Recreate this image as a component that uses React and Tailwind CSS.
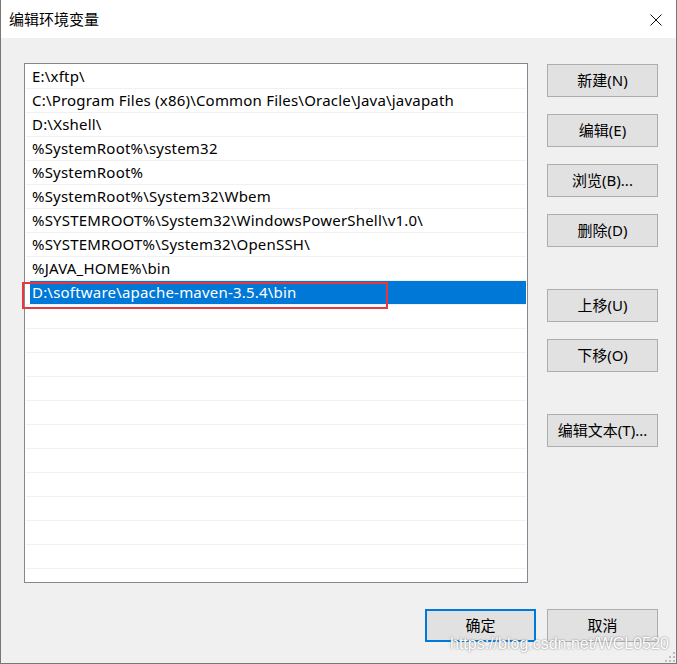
const paths = [
  'E:\\xftp\\',
  'C:\\Program Files (x86)\\Common Files\\Oracle\\Java\\javapath',
  'D:\\Xshell\\',
  '%SystemRoot%\\system32',
  '%SystemRoot%',
  '%SystemRoot%\\System32\\Wbem',
  '%SYSTEMROOT%\\System32\\WindowsPowerShell\\v1.0\\',
  '%SYSTEMROOT%\\System32\\OpenSSH\\',
  '%JAVA_HOME%\\bin',
  'D:\\software\\apache-maven-3.5.4\\bin',
]

const SELECTED = 9
const rows = [...paths, ...Array(12).fill('')]

function Button({ children, primary, className = '' }) {
  return (
    <button
      className={`flex h-[33px] w-[111px] items-center justify-center bg-[#e1e1e1] text-[15px] leading-none text-black ${
        primary ? 'border-2 border-[#0078d7]' : 'border border-[#adadad]'
      } ${className}`}
    >
      {children}
    </button>
  )
}

export default function App() {
  return (
    <div
      className="relative flex h-[664px] w-[677px] flex-col overflow-hidden border-x border-b border-[#777777] bg-[#f0f0f0]"
      style={{ fontFamily: '"Noto Sans", "Noto Sans CJK SC", sans-serif' }}
    >
      {/* title bar */}
      <div className="flex h-[38px] shrink-0 items-center justify-between bg-white pl-[8px] pr-[14px]">
        <span className="text-[15px] text-black">编辑环境变量</span>
        <svg width="12" height="12" viewBox="0 0 12 12" className="mt-[1px]">
          <path d="M0.5 0.5 L11.5 11.5 M11.5 0.5 L0.5 11.5" stroke="#111" strokeWidth="1" fill="none" />
        </svg>
      </div>

      <div className="flex flex-1 flex-col pl-[23px] pr-[18px]">
        <div className="mt-[25px] flex items-start gap-[19px]">
          {/* path list */}
          <div className="h-[520px] w-[504px] overflow-hidden border border-[#828790] bg-white pt-px">
            {rows.map((p, i) => (
              <div
                key={i}
                className="mx-px flex h-[24px] whitespace-nowrap border-b border-[#f0f0f0] text-[15px] leading-[23px] tracking-[0.2px]"
              >
                {i === SELECTED ? (
                  <div className="ml-[4px] flex-1 bg-[#0078d7] pl-[2px] text-white">{p}</div>
                ) : (
                  <div className="pl-[6px] text-black">{p}</div>
                )}
              </div>
            ))}
          </div>

          {/* side buttons */}
          <div className="mt-px flex flex-col">
            <Button>新建(N)</Button>
            <Button className="mt-[17px]">编辑(E)</Button>
            <Button className="mt-[17px]">浏览(B)...</Button>
            <Button className="mt-[17px]">删除(D)</Button>
            <Button className="mt-[42px]">上移(U)</Button>
            <Button className="mt-[17px]">下移(O)</Button>
            <Button className="mt-[42px]">编辑文本(T)...</Button>
          </div>
        </div>

        <div className="mt-[26px] flex justify-end gap-[11px]">
          <Button primary>确定</Button>
          <Button>取消</Button>
        </div>
      </div>

      {/* red annotation around the new entry */}
      <div className="absolute left-[21px] top-[282px] h-[27px] w-[366px] border-2 border-[#e8383d]" />

      {/* watermark */}
      <div
        className="absolute left-[449px] top-[636px] whitespace-nowrap text-[16px] leading-[16px] text-white [text-shadow:0_0_2px_#6f6f6f]"
        style={{ fontFamily: '"Liberation Sans", sans-serif' }}
      >
        https://blog.csdn.net/WCL0520
      </div>

      {/* resize grip */}
      <svg width="10" height="10" viewBox="0 0 10 10" className="absolute bottom-[1px] right-[1px]">
        <rect x="8" y="0" width="2" height="2" fill="#bdbdbd" />
        <rect x="4" y="4" width="2" height="2" fill="#bdbdbd" />
        <rect x="8" y="4" width="2" height="2" fill="#bdbdbd" />
        <rect x="0" y="8" width="2" height="2" fill="#bdbdbd" />
        <rect x="4" y="8" width="2" height="2" fill="#bdbdbd" />
        <rect x="8" y="8" width="2" height="2" fill="#bdbdbd" />
      </svg>
    </div>
  )
}
